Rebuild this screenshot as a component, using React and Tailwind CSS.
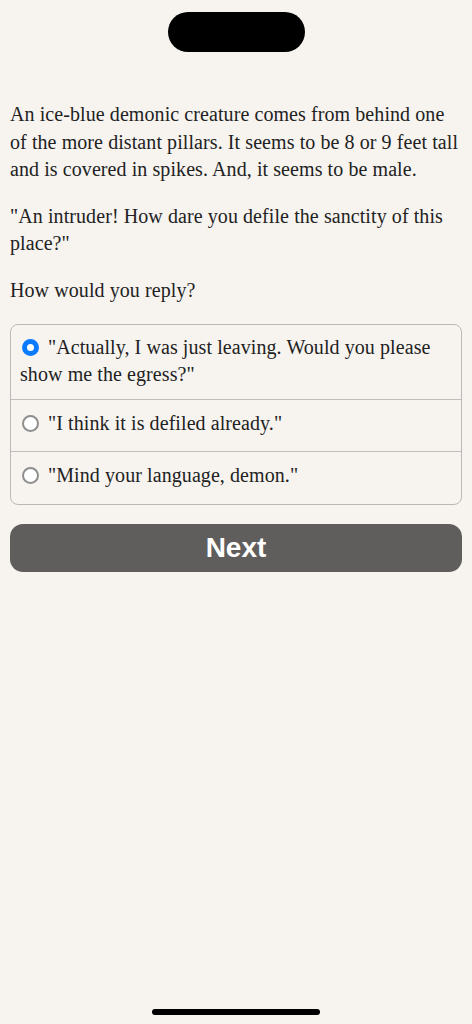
import React, { useState } from 'react';

const story = [
    'An ice-blue demonic creature comes from behind one of the more distant pillars. It seems to be 8 or 9 feet tall and is covered in spikes. And, it seems to be male.',
    '"An intruder! How dare you defile the sanctity of this place?"',
    'How would you reply?',
];

const choices = [
    '"Actually, I was just leaving. Would you please show me the egress?"',
    '"I think it is defiled already."',
    '"Mind your language, demon."',
];

function Radio({ checked }) {
    return checked ? (
        <span className="inline-block w-[17px] h-[17px] rounded-full border-[5px] border-[#0a7bff] bg-white align-[-2px] ml-[2px] mr-[9px]" />
    ) : (
        <span className="inline-block w-[17px] h-[17px] rounded-full border-2 border-[#8e8e8e] bg-white align-[-2px] ml-[2px] mr-[9px]" />
    );
}

export default function App() {
    const [selected, setSelected] = useState(0);

    return (
        <div className="min-h-screen flex flex-col bg-[#f7f4f0] text-[#222] font-['Liberation_Serif',serif]">
            <div className="flex justify-center pt-[12px]">
                <div className="w-[137px] h-[40px] rounded-full bg-black" />
            </div>

            <main className="flex-1 px-[10px] pt-[49px]">
                {story.map((p, i) => (
                    <p key={i} className="text-[20px] leading-[27.6px] tracking-[0.08px] mb-[19px]">
                        {p}
                    </p>
                ))}

                <div className="mt-[3px] rounded-lg border border-[#b9b9b9] overflow-hidden">
                    {choices.map((c, i) => (
                        <div
                            key={i}
                            onClick={() => setSelected(i)}
                            className={`px-[9px] text-[20px] leading-[27.6px] tracking-[0.08px] cursor-pointer ${i === 0 ? 'pt-[9px] pb-[10px]' : 'pt-[10px] pb-[14px] border-t border-[#bdbdbd]'}`}
                        >
                            <Radio checked={selected === i} />
                            {c}
                        </div>
                    ))}
                </div>

                <button className="mt-[19px] w-full h-[48px] rounded-[13px] bg-[#5f5e5c] text-white text-[28px] font-bold font-['Liberation_Sans',sans-serif] flex items-center justify-center">
                    Next
                </button>
            </main>

            <div className="flex justify-center pb-[9px]">
                <div className="w-[168px] h-[6px] rounded-full bg-black" />
            </div>
        </div>
    );
}
